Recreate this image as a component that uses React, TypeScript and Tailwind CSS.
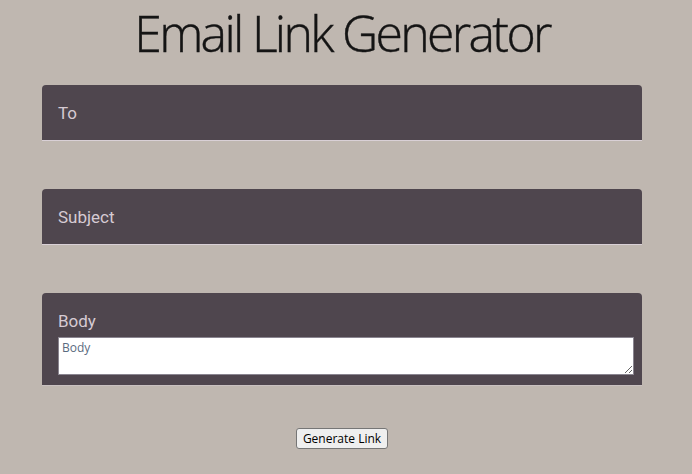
export default function App() {
  const label = "text-[17px] text-[#d6cbd3] leading-none";
  return (
    <div className="min-h-[474px] bg-[#bfb7b0] font-['Roboto',sans-serif]">
      <div className="ml-[42px] w-[600px] pt-[3px]">
        <h1 className="text-center font-['Open_Sans',sans-serif] font-light text-[50px] leading-[60px] tracking-[-2.7px] text-[#141414] [-webkit-text-stroke:0.4px_#141414]">
          Email Link Generator
        </h1>
        <div className="mt-[22px] h-[56px] rounded-t-[4px] bg-[#4f464e] border-b border-[#d9d0d6] px-4 pt-[20px]">
          <div className={label}>To</div>
        </div>
        <div className="mt-[48px] h-[56px] rounded-t-[4px] bg-[#4f464e] border-b border-[#d9d0d6] px-4 pt-[20px]">
          <div className={label}>Subject</div>
        </div>
        <div className="mt-[48px] rounded-t-[4px] bg-[#4f464e] border-b border-[#c9c1c1] pl-4 pr-2 pt-[20px] pb-[10px]">
          <div className={label}>Body</div>
          <textarea
            placeholder="Body"
            className="mt-[7px] block w-full h-[38px] bg-white border border-[#8a8590] px-[3px] py-[2px] text-[12px] leading-[15px] font-['Open_Sans',sans-serif] placeholder:text-[#5a6a80] resize-y"
          />
        </div>
        <div className="mt-[42px] flex justify-center">
          <button className="h-[21px] px-[6px] bg-[#efefef] border border-[#767676] rounded-[3px] text-[12px] leading-none text-black font-['Open_Sans',sans-serif]">
            Generate Link
          </button>
        </div>
      </div>
    </div>
  );
}
